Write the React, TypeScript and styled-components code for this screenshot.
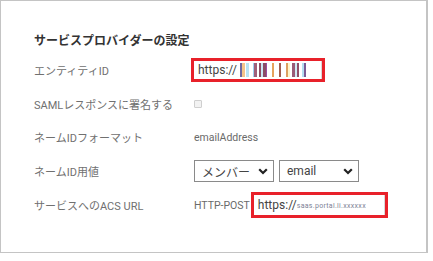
import styled, { createGlobalStyle } from 'styled-components';

const GlobalStyle = createGlobalStyle`
  body {
    margin: 0;
    background: #fff;
    font-family: Roboto, "Noto Sans CJK JP", sans-serif;
  }
`;

const stripes: [string, number][] = [
  ['#ffffff', 2], ['#6f6aa0', 2], ['#f4c48a', 3], ['#ffffff', 1], ['#b9e3f2', 3], ['#ffffff', 4],
  ['#9fd1ef', 1], ['#a05f79', 3], ['#ffffff', 2], ['#8e4d63', 2], ['#c9e7f4', 2], ['#8b4d66', 3],
  ['#9b4fa0', 1], ['#ffffff', 5], ['#e5a25c', 2], ['#ffffff', 5], ['#a15f4f', 2], ['#ffffff', 5],
  ['#dca060', 2], ['#fff6c9', 2], ['#ffffff', 2], ['#9a5a78', 3], ['#cfe9f4', 2], ['#8f4f6a', 2],
  ['#ffffff', 3], ['#b4dff0', 2], ['#7a5c96', 2], ['#ffffff', 1],
];

export default function App() {
  return (
    <>
      <GlobalStyle />
      <Panel>
        <Heading>サービスプロバイダーの設定</Heading>
        <Form>
          <Label>エンティティID</Label>
          <Value>
            <Highlight $height={24} $width={134}>
              <UrlField>
                <UrlText>https://</UrlText>
                <Stripes>
                  {stripes.map(([c, w], i) => (
                    <Stripe key={i} $color={c} $w={w} />
                  ))}
                </Stripes>
              </UrlField>
            </Highlight>
          </Value>

          <Label>SAMLレスポンスに署名する</Label>
          <Value>
            <Check />
          </Value>

          <Label>ネームIDフォーマット</Label>
          <Value>
            <Plain>emailAddress</Plain>
          </Value>

          <Label>ネームID用値</Label>
          <Value>
            <Select $width={80}>
              <span>メンバー</span>
              <Chevron />
            </Select>
            <Select $width={80}>
              <span>email</span>
              <Chevron />
            </Select>
          </Value>

          <Label>サービスへのACS URL</Label>
          <Value>
            <Plain>HTTP-POST</Plain>
            <Highlight $height={26} $width={137}>
              <UrlField>
                <UrlText>https://</UrlText>
                <Blurred>saas.portal.li.xxxxxx</Blurred>
              </UrlField>
            </Highlight>
          </Value>
        </Form>
      </Panel>
    </>
  );
}

function Chevron() {
  return (
    <svg width="10" height="7" viewBox="0 0 10 7">
      <path d="M1.2 1.2 L5 5 L8.8 1.2" fill="none" stroke="#222" strokeWidth="2.2" />
    </svg>
  );
}

const Panel = styled.div`
  box-sizing: border-box;
  width: 428px;
  height: 253px;
  border: 1px solid #c4c4c4;
  border-right-width: 2px;
  padding: 32px 0 0 33px;
`;

const Heading = styled.h2`
  margin: 0;
  font-size: 12px;
  line-height: 16px;
  font-weight: 700;
  color: #333;
`;

const Form = styled.div`
  display: grid;
  grid-template-columns: 160px 1fr;
  grid-auto-rows: 33.8px;
  align-items: center;
  margin-top: 4px;
`;

const Label = styled.div`
  font-size: 11px;
  color: #707070;
`;

const Value = styled.div`
  display: flex;
  align-items: center;
  gap: 4px;
`;

const Plain = styled.span`
  font-size: 10.5px;
  color: #6a6a6a;
`;

const Highlight = styled.div<{ $height: number; $width: number }>`
  box-sizing: border-box;
  height: ${(p) => p.$height}px;
  width: ${(p) => p.$width}px;
  border: 3px solid #e8212a;
  margin-left: -3px;
  display: flex;
`;

const UrlField = styled.div`
  flex: 1;
  display: flex;
  align-items: center;
  padding-left: 4px;
  background: #fff;
  border-right: 1px solid #d8d8d8;
  overflow: hidden;
`;

const UrlText = styled.span`
  font-size: 12px;
  color: #444;
`;

const Stripes = styled.div`
  display: flex;
  height: 14px;
  margin-left: 1px;
`;

const Stripe = styled.span<{ $color: string; $w: number }>`
  width: ${(p) => p.$w}px;
  background: ${(p) => p.$color};
`;

const Blurred = styled.span`
  font-size: 7px;
  letter-spacing: 0.3px;
  color: #7d8296;
  white-space: nowrap;
  margin-top: 2px;
`;

const Check = styled.span`
  box-sizing: border-box;
  width: 8px;
  height: 8px;
  border: 1px solid #cfcfcf;
  background: #f2f2f2;
  border-radius: 1px;
`;

const Select = styled.div<{ $width: number }>`
  box-sizing: border-box;
  width: ${(p) => p.$width}px;
  height: 22px;
  border: 1px solid #8a8a8a;
  display: flex;
  align-items: center;
  justify-content: space-between;
  padding: 0 5px 0 7px;
  font-size: 12px;
  color: #444;
  margin-right: 1px;
`;
